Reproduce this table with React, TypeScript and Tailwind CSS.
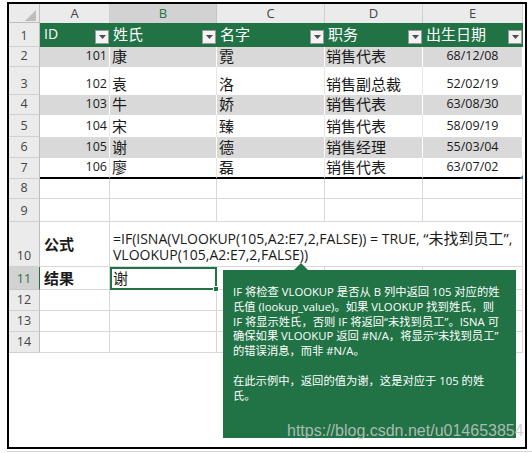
import React from 'react';

type Row = [string, string, string, string, string];
const DATA: Row[] = [
  ['101', '康', '霓', '销售代表', '68/12/08'],
  ['102', '袁', '洛', '销售副总裁', '52/02/19'],
  ['103', '牛', '娇', '销售代表', '63/08/30'],
  ['104', '宋', '臻', '销售代表', '58/09/19'],
  ['105', '谢', '德', '销售经理', '55/03/04'],
  ['106', '廖', '磊', '销售代表', '63/07/02'],
];

function RowHead({ n, selected }: { n: number; selected?: boolean }) {
  return (
    <div
      className={
        selected
          ? 'flex items-end justify-center border-b border-r border-b-[#c6c6c6] border-r-[#217346] bg-[#d2d2d2] pb-[1px] text-[12.5px] leading-[18px] text-[#217346]'
          : 'flex items-end justify-center border-b border-r border-b-[#d0d0d0] border-r-[#bdbdbd] bg-[#ebebeb] pb-[1px] text-[12.5px] leading-[18px] text-[#444]'
      }
    >
      {n}
    </div>
  );
}

function Filter() {
  return (
    <span className="mb-[3px] mr-[1px] flex h-[14px] w-[14px] shrink-0 items-center justify-center self-end border border-[#9b9b9b] bg-[#f3f3f3]">
      <svg width="7" height="4" viewBox="0 0 7 4">
        <path d="M0 0H7L3.5 4Z" fill="#4d4d4d" />
      </svg>
    </span>
  );
}

function Plain() {
  return <div className="border-b border-r border-[#d8d8d8]" />;
}

export default function App() {
  return (
    <div className="bg-white pl-[7px] pt-[2px] font-['Open_Sans','Noto_Sans_CJK_SC',sans-serif]">
      <div className="relative h-[447px] w-[520px] overflow-hidden border-2 border-black bg-white">
        <div className="grid grid-cols-[31px_70px_107px_108px_98px_100px] grid-rows-[19px_24px_20px_28px_20px_22px_21px_21px_20px_23px_45px_23px_21px_21px_21px]">
          {/* column header row */}
          <div className="flex items-end justify-end border-b border-r border-b-[#bdbdbd] border-r-[#bdbdbd] bg-[#ebebeb] pb-[1px] pr-[3px]">
            <svg width="11" height="11" viewBox="0 0 11 11">
              <path d="M11 0V11H0Z" fill="#bdbdbd" />
            </svg>
          </div>
          <div className="flex items-center justify-center border-r border-[#d0d0d0] bg-[#ebebeb] text-[13px] text-[#444]">A</div>
          <div className="flex items-center justify-center border-r border-[#c4c4c4] bg-[#d2d2d2] text-[13px] text-[#217346]">B</div>
          <div className="flex items-center justify-center border-r border-[#d0d0d0] bg-[#ebebeb] text-[13px] text-[#444]">C</div>
          <div className="flex items-center justify-center border-r border-[#d0d0d0] bg-[#ebebeb] text-[13px] text-[#444]">D</div>
          <div className="flex items-center justify-center border-r border-[#d0d0d0] bg-[#ebebeb] text-[13px] text-[#444]">E</div>

          {/* row 1 : table header */}
          <RowHead n={1} />
          <div className="flex justify-between bg-[#217346] pl-[4px] text-white">
            <span className="self-end pb-[4px] text-[14px] leading-[18px]">ID</span>
            <Filter />
          </div>
          {['姓氏', '名字', '职务', '出生日期'].map((h) => (
            <div key={h} className="flex justify-between bg-[#217346] pl-[3px] text-white">
              <span className="self-end pb-[4px] text-[15px] leading-[18px]">{h}</span>
              <Filter />
            </div>
          ))}

          {/* rows 2-7 */}
          {DATA.map((r, i) => {
            const band = i % 2 === 0;
            const last = i === DATA.length - 1;
            const cell = band
              ? last
                ? 'flex items-end border-b-2 border-r border-b-black border-r-white bg-[#d9d9d9] pb-[1px]'
                : 'flex items-end border-r border-r-white bg-[#d9d9d9] pb-[2px]'
              : last
                ? 'flex items-end border-b-2 border-r border-b-black border-r-[#e6e6e6] bg-white pb-[1px]'
                : 'flex items-end border-r border-r-[#e6e6e6] bg-white pb-[2px]';
            return (
              <React.Fragment key={r[0]}>
                <RowHead n={i + 2} />
                <div className={cell + ' justify-end pr-[2px] text-[12.5px] leading-[18px] text-[#1a1a1a]'}>{r[0]}</div>
                <div className={cell + ' pl-[2px] text-[15px] leading-[18px] text-[#1a1a1a]'}>{r[1]}</div>
                <div className={cell + ' pl-[2px] text-[15px] leading-[18px] text-[#1a1a1a]'}>{r[2]}</div>
                <div className={cell + ' pl-[1px] text-[15px] leading-[18px] text-[#1a1a1a]'}>{r[3]}</div>
                <div className={cell + ' justify-center text-[12.5px] leading-[18px] text-[#1a1a1a]'}>{r[4]}</div>
              </React.Fragment>
            );
          })}

          {/* rows 8-9 */}
          <RowHead n={8} />
          <Plain />
          <Plain />
          <Plain />
          <Plain />
          <Plain />
          <RowHead n={9} />
          <Plain />
          <Plain />
          <Plain />
          <Plain />
          <Plain />

          {/* row 10 */}
          <RowHead n={10} />
          <div className="flex items-center border-b border-r border-[#d8d8d8] pl-[4px] text-[15px] font-bold text-[#1a1a1a]">公式</div>
          <div className="col-span-4 flex flex-col justify-end whitespace-nowrap border-b border-r border-[#d8d8d8] pb-[3px] pl-[3px] text-[14px] leading-[16px] text-[#1a1a1a]">
            <div>
              =IF(ISNA(VLOOKUP(105,A2:E7,2,FALSE)) = TRUE, <span className="text-[15px]">“未找到员工”</span>,
            </div>
            <div>VLOOKUP(105,A2:E7,2,FALSE))</div>
          </div>

          {/* row 11 */}
          <RowHead n={11} selected />
          <div className="flex items-center border-b border-r border-[#d8d8d8] pl-[4px] text-[15px] font-bold text-[#1a1a1a]">结果</div>
          <div className="relative flex items-center border-2 border-[#217346] pl-[1px] text-[15px] text-[#1a1a1a]">
            谢
            <span className="absolute -bottom-[4px] -right-[4px] h-[6px] w-[6px] border border-white bg-[#217346]" />
          </div>
          <Plain />
          <Plain />
          <Plain />

          {/* rows 12-14 */}
          {[12, 13, 14].map((n) => (
            <React.Fragment key={n}>
              <RowHead n={n} />
              <Plain />
              <Plain />
              <Plain />
              <Plain />
              <Plain />
            </React.Fragment>
          ))}
        </div>

        {/* table resize handle */}
        <svg className="absolute left-[510px] top-[171px]" width="4" height="4" viewBox="0 0 4 4">
          <path d="M4 0V4H0Z" fill="#2e62b8" />
        </svg>

        {/* callout */}
        <svg className="absolute left-[284px] top-[259px]" width="16" height="8" viewBox="0 0 16 8">
          <path d="M8 0L16 8H0Z" fill="#217346" />
        </svg>
        <div className="absolute left-[214px] top-[266px] h-[168px] w-[293px] bg-[#217346] pl-[10px] pt-[15px] text-[11.3px] leading-[14.8px] text-white">
          <div className="whitespace-nowrap">IF 将检查 VLOOKUP 是否从 B 列中返回 105 对应的姓</div>
          <div className="whitespace-nowrap">氏值 (lookup_value)。如果 VLOOKUP 找到姓氏，则</div>
          <div className="whitespace-nowrap">IF 将显示姓氏，否则 IF 将返回“未找到员工”。ISNA 可</div>
          <div className="whitespace-nowrap">确保如果 VLOOKUP 返回 #N/A，将显示“未找到员工”</div>
          <div className="whitespace-nowrap">的错误消息，而非 #N/A。</div>
          <div className="h-[14.8px]" />
          <div className="whitespace-nowrap">在此示例中，返回的值为谢，这是对应于 105 的姓</div>
          <div className="whitespace-nowrap">氏。</div>
        </div>

        {/* watermark */}
        <div className="absolute left-[278px] top-[418px] whitespace-nowrap font-['Liberation_Sans',Arial,sans-serif] text-[16px] leading-[18px] text-[#c8c8c8]/85">
          https://blog.csdn.net/u014653854
        </div>
      </div>
      <div className="mt-[2px] h-px w-[525px] bg-[#d8d8d8]" />
    </div>
  );
}
